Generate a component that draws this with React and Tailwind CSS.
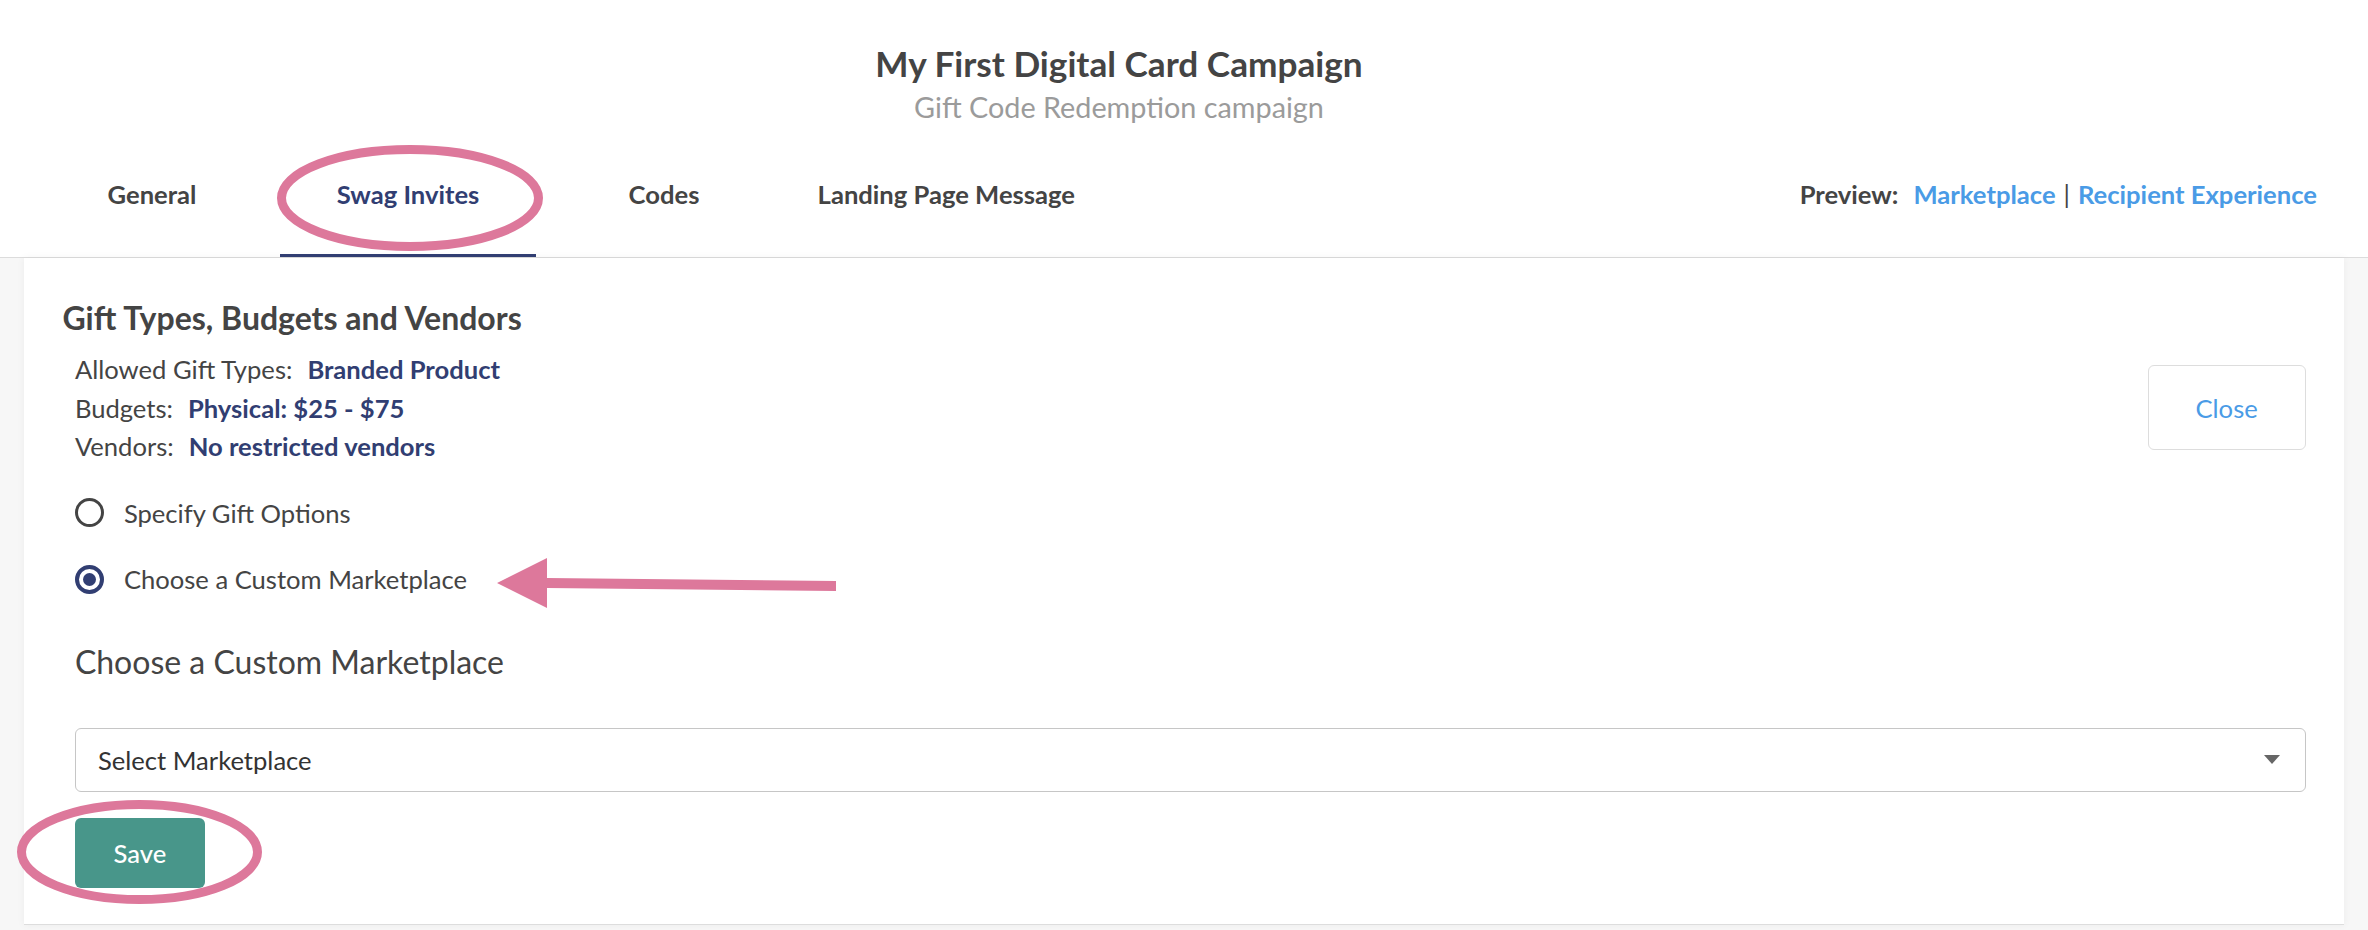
import React from "react";

const tabs = [
  { label: "General", active: false },
  { label: "Swag Invites", active: true },
  { label: "Codes", active: false },
  { label: "Landing Page Message", active: false },
];

export default function App() {
  return (
    <div className="relative min-h-[930px] bg-[#f7f7f7] font-['Lato',sans-serif] text-[#444]">
      <header className="bg-white border-b border-[#dcdcdc]">
        <div className="flex flex-col items-center pt-[42px] pr-[130px]">
          <h1 className="text-[35.2px] leading-[1.2] font-bold text-[#444]">My First Digital Card Campaign</h1>
          <p className="mt-[6px] text-[28.8px] leading-[1.2] text-[#9b9b9b]">Gift Code Redemption campaign</p>
        </div>
        <div className="mt-[54px] flex items-end justify-between pl-[24px] pr-[51px]">
          <nav className="flex">
            {tabs.map((t) => (
              <div
                key={t.label}
                className={
                  t.active
                    ? "min-w-[256px] px-[25.6px] pb-[45px] border-b-[3px] border-[#313e72] text-center text-[25.6px] leading-[1.2] font-bold text-[#313e72]"
                    : "min-w-[256px] px-[25.6px] pb-[45px] border-b-[3px] border-transparent text-center text-[25.6px] leading-[1.2] font-bold text-[#444]"
                }
              >
                {t.label}
              </div>
            ))}
          </nav>
          <div className="flex pb-[48px] text-[25.6px] leading-[1.2] font-bold">
            <span className="text-[#444]">Preview:</span>
            <span className="ml-[15px] text-[#4a9be6]">Marketplace</span>
            <span className="mx-[8px] font-normal text-[#444]">|</span>
            <span className="text-[#4a9be6]">Recipient Experience</span>
          </div>
        </div>
      </header>

      <main className="mx-[24px] bg-white border-b border-[#dddddd] px-[38.4px] pt-[40.5px] pb-[36px] shadow-[0_0_8px_rgba(0,0,0,0.05)]">
        <h2 className="text-[32px] leading-[1.2] font-bold text-[#444]">Gift Types, Budgets and Vendors</h2>
        <div className="pl-[12.5px]">
          <div className="mt-[13px] flex items-center justify-between">
            <div className="text-[25.6px] leading-[1.5] text-[#444]">
              <div>
                Allowed Gift Types:<span className="ml-[15px] font-bold text-[#313e72]">Branded Product</span>
              </div>
              <div>
                Budgets:<span className="ml-[15px] font-bold text-[#313e72]">Physical: $25 - $75</span>
              </div>
              <div>
                Vendors:<span className="ml-[15px] font-bold text-[#313e72]">No restricted vendors</span>
              </div>
            </div>
            <button className="w-[158px] h-[85px] rounded-[6px] border border-[#dddddd] bg-white text-[25.6px] text-[#4a9be6]">
              Close
            </button>
          </div>

          <div className="mt-[28px] flex items-center gap-[20px] text-[25.6px] leading-[1.5] text-[#444]">
            <span className="w-[29px] h-[29px] rounded-full border-[3px] border-[#444]" />
            <span>Specify Gift Options</span>
          </div>
          <div className="mt-[28px] flex items-center gap-[20px] text-[25.6px] leading-[1.5] text-[#444]">
            <span className="flex items-center justify-center w-[29px] h-[29px] rounded-full border-[4px] border-[#313e72]">
              <span className="w-[13px] h-[13px] rounded-full bg-[#313e72]" />
            </span>
            <span>Choose a Custom Marketplace</span>
          </div>

          <h3 className="mt-[45px] text-[32px] leading-[1.2] text-[#444]">Choose a Custom Marketplace</h3>

          <div className="mt-[46px] flex h-[64px] items-center justify-between rounded-[6px] border border-[#c6c6c6] pl-[22px] pr-[25px]">
            <span className="text-[25.6px] text-[#333]">Select Marketplace</span>
            <svg width="16" height="9" viewBox="0 0 16 9">
              <polygon points="0,0 16,0 8,9" fill="#666" />
            </svg>
          </div>

          <button className="mt-[26px] w-[130px] h-[70px] rounded-[6px] bg-[#48968a] text-[25.6px] font-medium text-white">
            Save
          </button>
        </div>
      </main>

      {/* annotations */}
      <svg className="absolute left-[272px] top-[140px]" width="276" height="116" viewBox="0 0 276 116">
        <ellipse cx="138" cy="58" rx="128.5" ry="48.5" fill="none" stroke="#dd789b" strokeWidth="9" />
      </svg>
      <svg className="absolute left-[490px] top-[550px]" width="360" height="70" viewBox="0 0 360 70">
        <polygon points="7,33 57,8 57,28 346,31 346,41 57,38 57,58" fill="#dd789b" />
      </svg>
      <svg className="absolute left-[12px] top-[795px]" width="256" height="115" viewBox="0 0 256 115">
        <ellipse cx="127.5" cy="57" rx="118" ry="47.5" fill="none" stroke="#dd789b" strokeWidth="9" />
      </svg>
    </div>
  );
}
